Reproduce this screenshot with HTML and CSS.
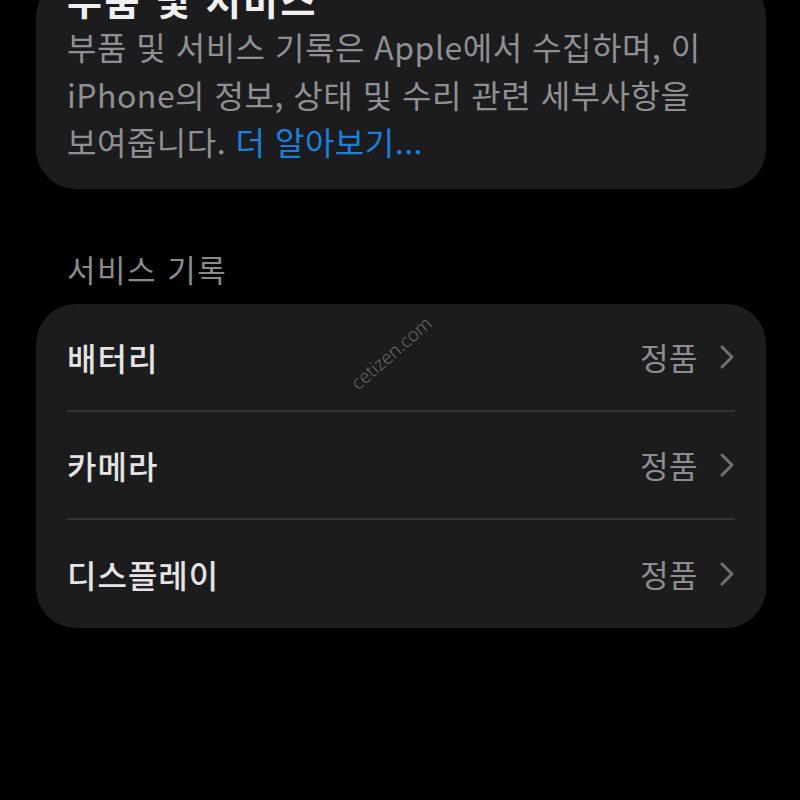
FILE: index.html
```html
<!DOCTYPE html>
<html lang="ko">
<head>
<meta charset="utf-8">
<title>부품 및 서비스</title>
<link rel="stylesheet" href="styles.css">
</head>
<body>
<div class="page">
  <section class="info-card">
    <h1 class="info-title">부품 및 서비스</h1>
    <p class="info-desc">부품 및 서비스 기록은 Apple에서 수집하며, 이<br>iPhone의 정보, 상태 및 수리 관련 세부사항을<br>보여줍니다. <span class="link">더 알아보기...</span></p>
  </section>

  <h2 class="section-title">서비스 기록</h2>

  <section class="list-card">
    <div class="row">
      <div class="row-inner">
        <span class="label">배터리</span>
        <span class="value">정품</span>
        <svg class="chev" width="16" height="26" viewBox="0 0 16 26"><path d="M3 3 L13 13 L3 23" fill="none" stroke="#707072" stroke-width="3" stroke-linecap="round" stroke-linejoin="round"/></svg>
      </div>
    </div>
    <div class="row">
      <div class="row-inner">
        <span class="label">카메라</span>
        <span class="value">정품</span>
        <svg class="chev" width="16" height="26" viewBox="0 0 16 26"><path d="M3 3 L13 13 L3 23" fill="none" stroke="#707072" stroke-width="3" stroke-linecap="round" stroke-linejoin="round"/></svg>
      </div>
    </div>
    <div class="row">
      <div class="row-inner">
        <span class="label">디스플레이</span>
        <span class="value">정품</span>
        <svg class="chev" width="16" height="26" viewBox="0 0 16 26"><path d="M3 3 L13 13 L3 23" fill="none" stroke="#707072" stroke-width="3" stroke-linecap="round" stroke-linejoin="round"/></svg>
      </div>
    </div>
    <span class="watermark">cetizen.com</span>
  </section>
</div>
</body>
</html>
```

FILE: styles.css
```css
html, body {
  margin: 0;
  padding: 0;
  background: #000;
}

body {
  width: 800px;
  height: 800px;
  overflow: hidden;
  font-family: "Noto Sans CJK KR", "Noto Sans", sans-serif;
}

.page {
  padding: 0 34px 0 36px;
}

.info-card {
  margin-top: -26px;
  background: #1c1c1e;
  border-radius: 40px;
  padding: 0 31px 23px;
}

.info-title {
  margin: 3px 0 0;
  font-size: 38px;
  line-height: 44px;
  font-weight: 700;
  letter-spacing: 2.5px;
  color: #f0f0f0;
}

.info-desc {
  margin: 2px 0 0;
  font-size: 32px;
  line-height: 47.5px;
  font-weight: 400;
  color: #909092;
  letter-spacing: 0.5px;
  white-space: nowrap;
}

.link {
  color: #1b80dc;
}

.section-title {
  margin: 60px 0 0;
  padding-left: 31px;
  font-size: 31px;
  line-height: 40px;
  font-weight: 400;
  letter-spacing: 1.5px;
  color: #8a8a8c;
}

.list-card {
  position: relative;
  margin-top: 15px;
  background: #1c1c1e;
  border-radius: 40px;
  padding: 0 31px;
}

.row {
  height: 108px;
}

.row-inner {
  display: flex;
  align-items: center;
  height: 106px;
  border-bottom: 2px solid #333335;
}

.row:last-of-type .row-inner {
  border-bottom: none;
  height: 108px;
}

.label {
  flex: 1;
  font-size: 32px;
  font-weight: 500;
  letter-spacing: 1px;
  color: #e4e4e4;
}

.value {
  font-size: 31px;
  color: #8e8e90;
  letter-spacing: 0.5px;
  margin-right: 21px;
}

.chev {
  display: block;
}

.watermark {
  position: absolute;
  left: 305px;
  top: 36px;
  font-family: "Open Sans", "Liberation Sans", sans-serif;
  font-weight: 300;
  font-size: 18.5px;
  color: #707072;
  transform: rotate(-41deg);
  transform-origin: center;
}
```
